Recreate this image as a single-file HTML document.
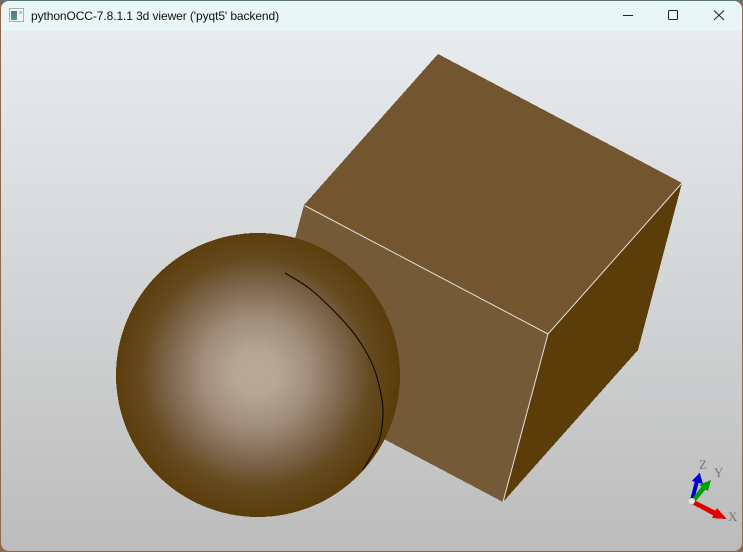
<!DOCTYPE html>
<html>
<head>
<meta charset="utf-8">
<style>
html,body{margin:0;padding:0;width:743px;height:552px;overflow:hidden;background:#8a6a4a;}
#win{position:absolute;left:1px;top:1px;width:741px;height:550px;border-radius:8px;overflow:hidden;background:linear-gradient(#e8ecef 0,#e8ecef 30px,#bcbcbc 100%);}
#bar{position:absolute;left:0;top:0;width:741px;height:30px;background:#e8f6f5;}
#title{position:absolute;left:30px;top:7px;font:12px/16px "Liberation Sans",sans-serif;letter-spacing:-0.09px;color:#111;white-space:nowrap;}
svg{position:absolute;left:0;top:0;}
</style>
</head>
<body>
<svg width="743" height="552" style="z-index:0">
<rect width="743" height="552" fill="#8a6a4a"/>
<rect width="743" height="2" fill="#5b7474"/>
</svg>
<div id="win" style="z-index:1">
<div id="bar"><div id="title">pythonOCC-7.8.1.1 3d viewer ('pyqt5' backend)</div></div>
</div>
<svg width="743" height="552" style="z-index:2">
<defs>
<radialGradient id="s" gradientUnits="userSpaceOnUse" cx="256" cy="373" r="143">
<stop offset="0" stop-color="#b9a999"/>
<stop offset=".15" stop-color="#b7a696"/>
<stop offset=".38" stop-color="#a08d7b"/>
<stop offset=".62" stop-color="#7d654a"/>
<stop offset=".8" stop-color="#654a20"/>
<stop offset="1" stop-color="#5b3d0a"/>
</radialGradient>
<linearGradient id="ic" x1="0" y1="0" x2="0" y2="1">
<stop offset="0" stop-color="#4a7a9a"/>
<stop offset="1" stop-color="#4f9a80"/>
</linearGradient>
</defs>
<!-- title icon -->
<rect x="9.5" y="8.5" width="14" height="13" fill="#f2f4f4" stroke="#a8b0b0"/>
<rect x="11" y="11" width="6" height="9" fill="url(#ic)"/>
<rect x="19" y="11" width="3" height="3" fill="#b8c4c8"/>
<!-- window buttons -->
<path d="M623 15.5H633" stroke="#222" stroke-width="1"/>
<rect x="668.5" y="10.5" width="9" height="9" rx="1" fill="none" stroke="#222"/>
<path d="M714 10.5L724 20M724 10.5L714 20" stroke="#222" stroke-width="1" fill="none"/>
<!-- cube -->
<g shape-rendering="crispEdges">
<polygon points="304,205 548,334 503,502 259,373" fill="#755a38"/>
<polygon points="438,54 682,183 548,334 304,205" fill="#73552f"/>
<polygon points="548,334 682,183 638,350 503,502" fill="#5b3d0a"/>
</g>
<path d="M304.5,205.5L548,334L682,183M548,334L503,502" fill="none" stroke="#e4e0da" stroke-width="1"/>
<!-- sphere -->
<circle cx="258" cy="375" r="142" fill="url(#s)" shape-rendering="crispEdges"/>
<path d="M285,273L296,279.5Q307,286 315,293Q323,300 333,310Q343,320 350.5,329Q358,338 365,350Q372,362 375,371Q378,380 380.5,391.5Q383,403 383,411.5Q383,420 381.5,430Q380,440 376.5,446.5Q373,453 363,470" fill="none" stroke="#0a0804" stroke-width="1.1" stroke-linejoin="round"/>
<!-- triedron -->
<g shape-rendering="crispEdges">
<polygon points="690,500 694,500 699,482 695,481" fill="#0000d0"/>
<polygon points="699.7,472.7 703,484 692,481" fill="#0000d0"/>
<polygon points="692,499 695,502 706,489 702,486" fill="#00a000"/>
<polygon points="711,480 708,491 699,485" fill="#00a000"/>
<polygon points="694,500 692,504 716,517 718,512" fill="#e00000"/>
<polygon points="726.7,519 712,518 717,508" fill="#e00000"/>
</g>
<circle cx="692" cy="501" r="3" fill="#eeeeee"/>
<text x="699" y="469" font-family="Liberation Serif,serif" font-size="13" fill="#777">Z</text>
<text x="714" y="477" font-family="Liberation Serif,serif" font-size="13" fill="#777">Y</text>
<text x="728" y="521" font-family="Liberation Serif,serif" font-size="13" fill="#777">X</text>
</svg>
</body>
</html>
